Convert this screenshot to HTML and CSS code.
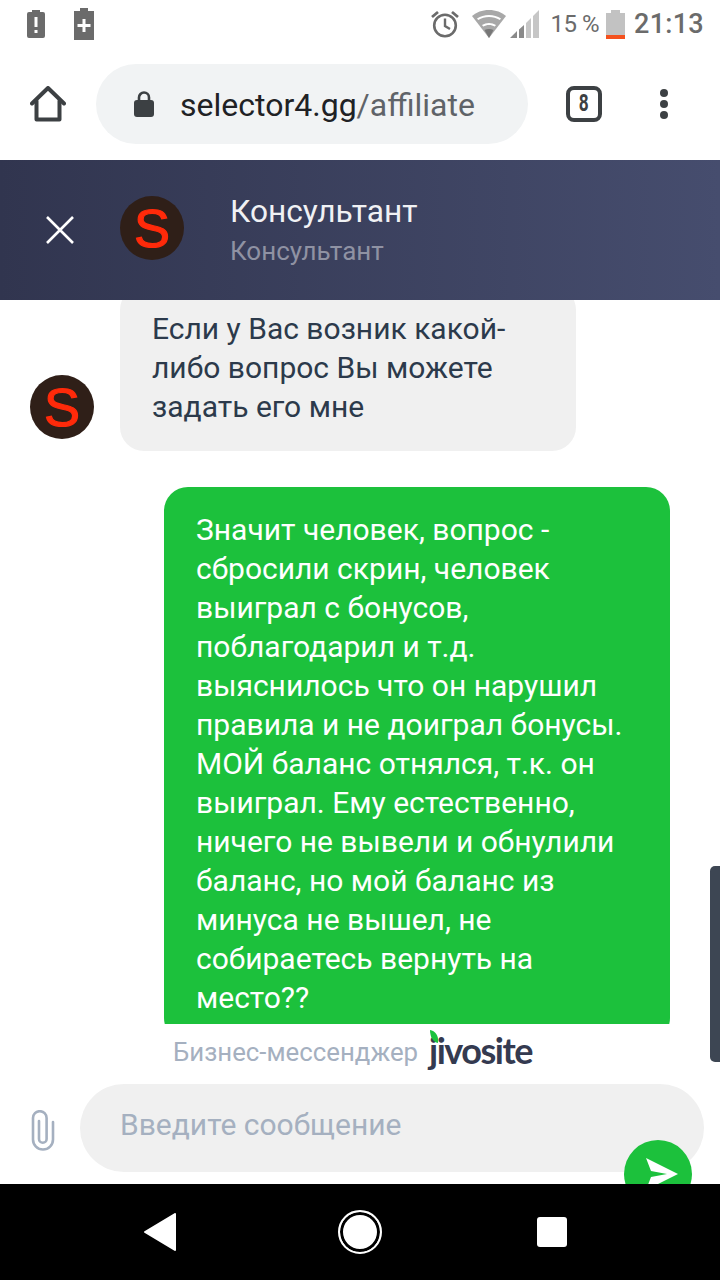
FILE: index.html
```html
<!DOCTYPE html>
<html lang="ru">
<head>
  <meta charset="UTF-8" />
  <title>selector4.gg/affiliate</title>
  <link rel="stylesheet" href="styles.css">
</head>
<body>
  <div class="page">
    <div class="status-bar">
      <div class="status-left">
        <svg class="ic-batt-alert" width="18" height="28" viewBox="0 0 18 28"><path fill="#6b6b6b" d="M5 0h8v2h3q2 0 2 2v22q0 2-2 2H2q-2 0-2-2V4q0-2 2-2h3z"/><path fill="#fff" d="M7.500 7h3v10h-3zM7.500 20h3v3h-3z"/></svg>
        <svg class="ic-batt-plus" width="20" height="32" viewBox="0 0 20 32"><path fill="#6b6b6b" d="M6 0h8v3h6v29H0V3h6z"/><path fill="#fff" d="M8.500 11h3v5h5v3h-5v5h-3v-5h-5v-3h5z"/></svg>
      </div>
      <div class="status-right">
        <svg width="28" height="28" viewBox="0 0 28 28" fill="none" stroke="#6b6b6b"><circle cx="14" cy="15.500" r="10.800" stroke-width="2.600"/><path d="M14 8.500v7.500l5 3" stroke-width="2.400"/><path d="M1 7l6-5M27 7l-6-5" stroke-width="2.800"/></svg>
        <svg class="ic-wifi" width="34" height="28" viewBox="0 0 34 28"><path fill="#a8a8a8" d="M17 0C10 0 4.500 2.300 0 6l17 22L34 6C29.500 2.300 24 0 17 0z"/><path fill="#fff" d="M5 8.500C8.500 6.200 12.500 5 17 5s8.500 1.200 12 3.500l-1.200 1.600C24.500 8 21 7 17 7s-7.500 1-10.800 3.100zM10 15c2.200-1.300 4.500-2 7-2s4.800.7 7 2l-1.200 1.600c-1.800-1-3.700-1.600-5.800-1.600s-4 .6-5.800 1.600z"/><path fill="#777" d="M12.500 20c1.400-.7 2.900-1 4.500-1s3.100.3 4.500 1L17 28z"/></svg>
        <svg class="ic-signal" width="29" height="28" viewBox="0 0 29 28"><path fill="#c6c6c6" d="M29 0v28h-6V6zM21 8v20h-5V13z"/><path fill="#8a8a8a" d="M14 15v13H9V19.500zM7 21v7H0z"/></svg>
        <span class="status-pct">15 %</span>
        <svg class="ic-batt" width="19" height="29" viewBox="0 0 19 29"><path fill="#c2c2c2" d="M5 0h9v3h5v22H0V3h5z"/><path fill="#f4511e" d="M0 25h19v4H0z"/></svg>
        <span class="status-time">21:13</span>
      </div>
    </div>

    <div class="toolbar">
      <svg class="ic-home" width="36" height="36" viewBox="0 0 36 36" fill="none" stroke="#3c4043" stroke-width="4" stroke-linejoin="round" stroke-linecap="round"><path d="M2 17.500L18 2l16 15.500"/><path d="M6.500 15v18.500h23V15"/></svg>
      <div class="omnibox">
        <svg width="20" height="26" viewBox="0 0 20 26"><path fill="none" stroke="#3c4043" stroke-width="2.600" d="M5 11V6.500a5 5 0 0 1 10 0V11"/><rect y="9" width="20" height="17" rx="3" fill="#3c4043"/></svg>
        <div class="url"><span class="url-host">selector4.gg</span>/affiliate</div>
      </div>
      <div class="tab-count"><span>8</span></div>
      <div class="menu-dots"><i></i><i></i><i></i></div>
    </div>

    <div class="chat-header">
      <svg class="ic-close" width="28" height="28" viewBox="0 0 28 28" stroke="#fff" stroke-width="2.600"><path d="M1 1l26 26M27 1L1 27"/></svg>
      <div class="avatar">S</div>
      <div class="agent">
        <div class="agent-name">Консультант</div>
        <div class="agent-role">Консультант</div>
      </div>
    </div>

    <div class="messages">
      <div class="msg-in">
        <div class="avatar">S</div>
        <div class="bubble bubble-in">Если у Вас возник какой-<br>либо вопрос Вы можете<br>задать его мне</div>
      </div>
      <div class="bubble bubble-out">Значит человек, вопрос - сбросили скрин, человек выиграл с бонусов, поблагодарил и т.д. выяснилось что он нарушил правила и не доиграл бонусы. МОЙ баланс отнялся, т.к. он выиграл. Ему естественно, ничего не вывели и обнулили баланс, но мой баланс из минуса не вышел, не собираетесь вернуть на место??</div>
    </div>

    <div class="brand">
      <span>Бизнес-мессенджер</span>
      <span class="brand-logo">jivosite<svg class="leaf" width="9" height="13" viewBox="0 0 9 13"><path fill="#1cc13c" d="M0 0c5 1 9 5 8 13C3 12 0 7 0 0z"/></svg></span>
    </div>

    <div class="composer">
      <svg class="ic-clip" width="24" height="42" viewBox="0 0 24 42" fill="none" stroke="#a5b0c0" stroke-width="2.600" stroke-linecap="round"><path d="M22 12V29.500a10 10 0 0 1-20 0V8a6.800 6.800 0 0 1 13.600 0V29a3.800 3.800 0 0 1-7.600 0V11"/></svg>
      <div class="composer-input">Введите сообщение</div>
      <div class="send-btn">
        <svg width="32" height="32" viewBox="0 0 32 32"><path fill="#fff" d="M0 0l32 16L0 32l5-13 16-3-16-3z"/></svg>
      </div>
    </div>

    <div class="nav-bar">
      <svg width="32" height="38" viewBox="0 0 32 38"><path fill="#fff" stroke="#fff" stroke-width="2" stroke-linejoin="round" d="M31 1v36L1 19z"/></svg>
      <div class="nav-home"></div>
      <div class="nav-recent"></div>
    </div>

    <div class="scrollbar"></div>
  </div>
</body>
</html>
```

FILE: styles.css
```css
body {
  margin: 0;
  background: #fff;
  font-family: Roboto, sans-serif;
}

.page {
  position: relative;
  width: 720px;
  height: 1280px;
  overflow: hidden;
  display: flex;
  flex-direction: column;
}

/* android status bar */
.status-bar {
  height: 48px;
  flex: none;
  display: flex;
  justify-content: space-between;
  align-items: center;
  padding: 0 16px 0 27px;
  color: #6b6b6b;
}

.status-left,
.status-right {
  display: flex;
  align-items: center;
}

.ic-batt-alert { margin-right: 29px; }
.ic-wifi { margin-left: 13px; }
.ic-signal { margin-left: 4px; }

.status-pct {
  font-size: 24px;
  letter-spacing: -0.5px;
  margin-left: 11px;
}

.ic-batt { margin-left: 7px; }

.status-time {
  font-size: 27px;
  font-weight: 500;
  margin-left: 9px;
  letter-spacing: 0.3px;
}

/* browser toolbar */
.toolbar {
  height: 112px;
  flex: none;
  display: flex;
  align-items: center;
  padding-left: 30px;
  box-sizing: border-box;
}

.omnibox {
  width: 432px;
  height: 80px;
  margin-left: 30px;
  border-radius: 40px;
  background: #f1f3f4;
  display: flex;
  align-items: center;
  padding-left: 38px;
  box-sizing: border-box;
}

.url {
  margin: 2px 0 0 26px;
  font-size: 32px;
  color: #5f6368;
}

.url-host { color: #202124; }

.tab-count {
  width: 36px;
  height: 36px;
  box-sizing: border-box;
  margin-left: 38px;
  border: 4px solid #3c4043;
  border-radius: 8px;
  color: #3c4043;
  font-size: 23px;
  font-weight: 700;
  text-align: center;
  line-height: 28px;
}

.tab-count span {
  display: inline-block;
  transform: scaleX(0.75);
}

.menu-dots {
  margin-left: 58px;
  display: flex;
  flex-direction: column;
  gap: 3px;
}

.menu-dots i {
  width: 8px;
  height: 8px;
  border-radius: 50%;
  background: #3c4043;
}

/* chat window */
.chat-header {
  height: 140px;
  flex: none;
  display: flex;
  align-items: center;
  padding-left: 46px;
  background: linear-gradient(to right, #31354f, #464d6e);
}

.avatar {
  width: 64px;
  height: 64px;
  flex: none;
  border-radius: 50%;
  background: #2f1f18;
  color: #ff2a0a;
  font-family: "Liberation Sans", sans-serif;
  font-size: 54px;
  -webkit-text-stroke: 1.2px #ff2a0a;
  line-height: 64px;
  text-align: center;
}

.chat-header .avatar {
  margin: -4px 0 0 46px;
}

.agent {
  margin: 1px 0 0 46px;
}

.agent-name {
  font-size: 31.7px;
  line-height: 40px;
  color: #f0f1f4;
}

.agent-role {
  font-size: 26px;
  line-height: 38px;
  color: #8f92a3;
}

.messages {
  height: 724px;
  flex: none;
  overflow: hidden;
  display: flex;
  flex-direction: column;
  font-size: 30px;
  line-height: 39px;
}

.msg-in {
  display: flex;
  align-items: flex-end;
  gap: 26px;
  padding-left: 30px;
  margin-top: -14px;
}

.msg-in .avatar { margin-bottom: 12px; }

.bubble {
  padding: 23px 32px 25px;
  border-radius: 24px;
}

.bubble-in {
  width: 456px;
  box-sizing: border-box;
  background: #f0f0f0;
  color: #2c3a4b;
}

.bubble-out {
  width: 506px;
  flex: none;
  box-sizing: border-box;
  margin: 36px 0 0 164px;
  background: #1cc13c;
  color: #fff;
}

.brand {
  height: 60px;
  flex: none;
  display: flex;
  align-items: center;
  padding: 0 0 4px 173px;
  box-sizing: border-box;
  font-size: 25.8px;
  color: #a5b0c0;
}

.brand-logo {
  position: relative;
  margin-left: 11px;
  font-family: Lato, sans-serif;
  font-size: 36px;
  line-height: 40px;
  font-weight: 700;
  color: #343a50;
  letter-spacing: -1.5px;
  top: -2px;
}

.leaf {
  position: absolute;
  left: 1px;
  top: 0;
}

.composer {
  position: relative;
  height: 100px;
  flex: none;
  overflow: hidden;
  display: flex;
  align-items: flex-start;
  padding-left: 31px;
  box-sizing: border-box;
}

.ic-clip { margin-top: 26px; }

.composer-input {
  width: 624px;
  height: 88px;
  margin-left: 25px;
  border-radius: 44px;
  background: #f0f0f0;
  padding-left: 40px;
  box-sizing: border-box;
  font-size: 30px;
  line-height: 82px;
  color: #a5b0c0;
}

.send-btn {
  position: absolute;
  left: 624px;
  top: 56px;
  width: 68px;
  height: 68px;
  box-sizing: border-box;
  padding-left: 7px;
  border-radius: 50%;
  background: #1cc13c;
  display: flex;
  align-items: center;
  justify-content: center;
}

.nav-bar {
  height: 96px;
  flex: none;
  background: #000;
  display: flex;
  align-items: center;
  padding-left: 144px;
}

.nav-home {
  width: 44px;
  height: 44px;
  box-sizing: border-box;
  margin-left: 162px;
  border: 2px solid #fff;
  border-radius: 50%;
  background: #fff;
  box-shadow: inset 0 0 0 3px #000;
}

.nav-recent {
  width: 30px;
  height: 30px;
  margin-left: 155px;
  border-radius: 3px;
  background: #fff;
}

.scrollbar {
  position: absolute;
  left: 710px;
  top: 866px;
  width: 10px;
  height: 196px;
  border-radius: 5px 0 0 5px;
  background: #3d4653;
}
```
